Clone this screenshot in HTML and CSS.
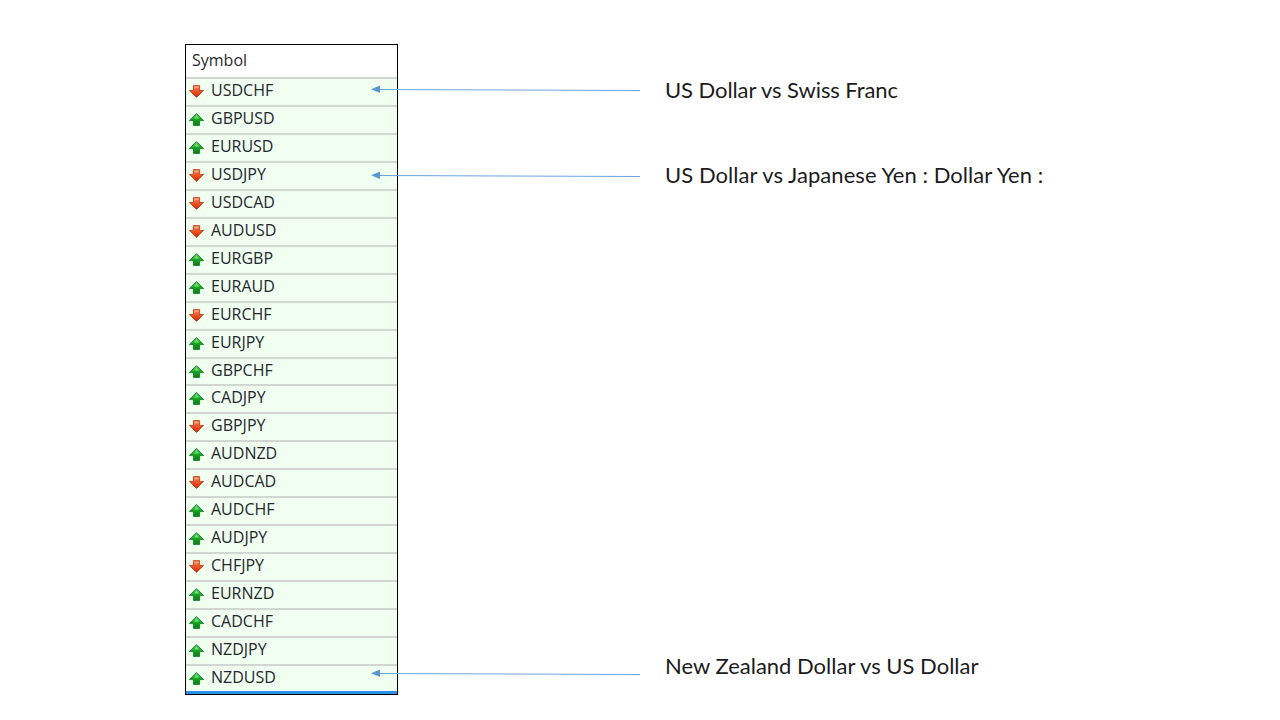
FILE: index.html
```html
<!DOCTYPE html>
<html lang="en">
<head>
<meta charset="utf-8">
<title>Symbols</title>
<link rel="stylesheet" href="styles.css">
</head>
<body>
<svg class="defs" width="0" height="0" aria-hidden="true">
  <defs>
    <linearGradient id="g-up" x1="0" y1="0" x2="0" y2="1"><stop offset="0" stop-color="#58d858"/><stop offset=".55" stop-color="#14a01e"/><stop offset="1" stop-color="#0a7a14"/></linearGradient>
    <linearGradient id="g-down" x1="0" y1="0" x2="0" y2="1"><stop offset="0" stop-color="#f58a5e"/><stop offset=".6" stop-color="#e8471c"/><stop offset="1" stop-color="#c92c08"/></linearGradient>
    <symbol id="up" viewBox="0 0 15 13"><path d="M7.500 .6 14.600 7.600H10.600V12.400H4.400V7.600H.4Z" fill="url(#g-up)" stroke="#0b7a1c" stroke-width=".8" stroke-linejoin="round"/><path d="M7.500 2.600 5 5.400H10Z" fill="#8ff09a" opacity=".7"/></symbol>
    <symbol id="down" viewBox="0 0 15 13"><path d="M7.500 12.400 14.600 5.400H10.600V.6H4.400V5.400H.4Z" fill="url(#g-down)" stroke="#b8380e" stroke-width=".8" stroke-linejoin="round"/><path d="M5.600 1.800H9.400V3.400H5.600Z" fill="#ffb898" opacity=".7"/></symbol>
  </defs>
</svg>
<main class="slide">
  <section class="panel">
    <div class="head">Symbol</div>
    <div class="row"><svg class="ico"><use href="#down"/></svg>USDCHF</div>
    <div class="row"><svg class="ico"><use href="#up"/></svg>GBPUSD</div>
    <div class="row"><svg class="ico"><use href="#up"/></svg>EURUSD</div>
    <div class="row"><svg class="ico"><use href="#down"/></svg>USDJPY</div>
    <div class="row"><svg class="ico"><use href="#down"/></svg>USDCAD</div>
    <div class="row"><svg class="ico"><use href="#down"/></svg>AUDUSD</div>
    <div class="row"><svg class="ico"><use href="#up"/></svg>EURGBP</div>
    <div class="row"><svg class="ico"><use href="#up"/></svg>EURAUD</div>
    <div class="row"><svg class="ico"><use href="#down"/></svg>EURCHF</div>
    <div class="row"><svg class="ico"><use href="#up"/></svg>EURJPY</div>
    <div class="row"><svg class="ico"><use href="#up"/></svg>GBPCHF</div>
    <div class="row"><svg class="ico"><use href="#up"/></svg>CADJPY</div>
    <div class="row"><svg class="ico"><use href="#down"/></svg>GBPJPY</div>
    <div class="row"><svg class="ico"><use href="#up"/></svg>AUDNZD</div>
    <div class="row"><svg class="ico"><use href="#down"/></svg>AUDCAD</div>
    <div class="row"><svg class="ico"><use href="#up"/></svg>AUDCHF</div>
    <div class="row"><svg class="ico"><use href="#up"/></svg>AUDJPY</div>
    <div class="row"><svg class="ico"><use href="#down"/></svg>CHFJPY</div>
    <div class="row"><svg class="ico"><use href="#up"/></svg>EURNZD</div>
    <div class="row"><svg class="ico"><use href="#up"/></svg>CADCHF</div>
    <div class="row"><svg class="ico"><use href="#up"/></svg>NZDJPY</div>
    <div class="row"><svg class="ico"><use href="#up"/></svg>NZDUSD</div>
    <div class="bar"></div>
  </section>
  <svg class="arrows" width="1280" height="720" viewBox="0 0 1280 720" aria-hidden="true">
    <g class="arrow-line">
      <path d="M380 89.500 640 90.500"/>
      <path d="M380 175.500 640 176.500"/>
      <path d="M380 673.500 640 674.500"/>
    </g>
    <g class="arrow-head">
      <path d="M371 89.300 380 85.500V93Z"/>
      <path d="M371 175.300 380 171.500V179Z"/>
      <path d="M371 673.300 380 669.500V677Z"/>
    </g>
  </svg>
  <p class="note note-1">US Dollar vs Swiss Franc</p>
  <p class="note note-2">US Dollar vs Japanese Yen : Dollar Yen :</p>
  <p class="note note-3">New Zealand Dollar vs US Dollar</p>
</main>
</body>
</html>
```
FILE: styles.css
```css
* { box-sizing: border-box; }
html, body { margin: 0; padding: 0; background: #fff; }
.defs { position: absolute; }
.slide { position: relative; width: 1280px; height: 720px; padding: 44px 0 0 185px; overflow: hidden; }
.panel { display: flex; flex-direction: column; width: 213px; height: 651px; border: 1px solid #000; background: #f0fff0; font-family: "Open Sans", sans-serif; font-size: 16px; font-weight: 500; color: #262630; }
.head { height: 32px; flex: none; background: #fff; padding: 0 0 2px 6px; line-height: 30px; color: #2a2a30; }
.row { height: 27.960px; flex: none; display: flex; align-items: center; border-top: 2px solid #d2d6d2; padding: 0 0 4px 3px; line-height: 22px; }
.ico { width: 15px; height: 13px; margin: 3px 7px 0 0; flex: none; }
.bar { flex: none; height: 3px; background: #2f8fe8; margin-top: -1px; }
.arrows { position: absolute; left: 0; top: 0; }
.arrow-line path { fill: none; stroke: #6ea4dc; stroke-width: 1.200; }
.arrow-head path { fill: #5b9bd5; }
.note { position: absolute; left: 665px; margin: 0; font-family: Lato, sans-serif; font-size: 22px; line-height: 28px; color: #1c1c1c; white-space: nowrap; }
.note-1 { top: 76px; letter-spacing: -0.080px; }
.note-2 { top: 161px; letter-spacing: 0.050px; }
.note-3 { top: 652px; }
```
